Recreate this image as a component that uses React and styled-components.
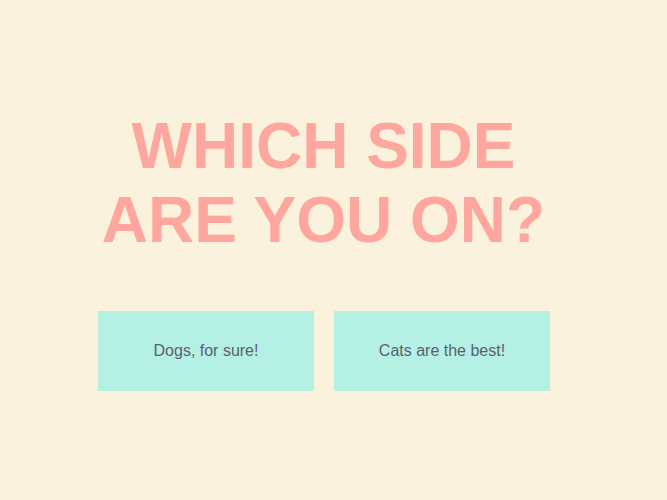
import React from "react";
import styled, { createGlobalStyle } from "styled-components";

const Global = createGlobalStyle`
  html, body { margin: 0; padding: 0; background: #faf2dc; }
  body { font-family: "Liberation Sans", Arial, sans-serif; }
`;

const Page = styled.main`
  min-height: 500px;
  display: flex;
  flex-direction: column;
  align-items: center;
  padding-top: 109px;
  box-sizing: border-box;
`;

const Title = styled.h1`
  margin: 0 20px 0 0;
  font-family: "Liberation Sans", Arial, sans-serif;
  font-weight: 700;
  font-size: 64px;
  line-height: 74px;
  color: #ffa69e;
  text-align: center;
  text-transform: uppercase;
`;

const Choices = styled.div`
  display: flex;
  margin-top: 54px;
  margin-left: 1px;
`;

const Choice = styled.button`
  width: 216px;
  height: 80px;
  margin-right: 20px;
  border: none;
  background: #b4f0e4;
  color: #5b5e70;
  font-family: "Liberation Sans", Arial, sans-serif;
  font-size: 16px;
  padding: 0;
  cursor: pointer;
`;

export default function App() {
  return (
    <>
      <Global />
      <Page>
        <Title>
          Which side
          <br />
          are you on?
        </Title>
        <Choices>
          <Choice>Dogs, for sure!</Choice>
          <Choice>Cats are the best!</Choice>
        </Choices>
      </Page>
    </>
  );
}
